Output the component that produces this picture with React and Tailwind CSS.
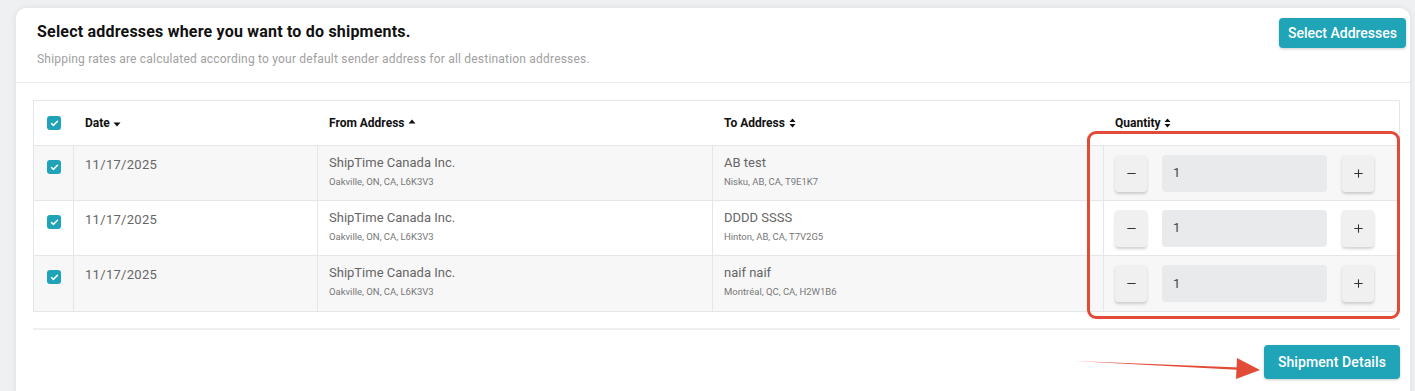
import { Check, Minus, Plus } from "lucide-react";

const rows = [
  { date: "11/17/2025", to: "AB test", toSub: "Nisku, AB, CA, T9E1K7", shade: true },
  { date: "11/17/2025", to: "DDDD SSSS", toSub: "Hinton, AB, CA, T7V2G5", shade: false },
  { date: "11/17/2025", to: "naif naif", toSub: "Montréal, QC, CA, H2W1B6", shade: true },
];

const cols = "grid grid-cols-[39px_244px_395px_391px_1fr]";

function Box() {
  return (
    <span className="flex h-[14px] w-[14px] items-center justify-center rounded-[3px] bg-[#1fa3b8]">
      <Check className="h-[9px] w-[9px] text-white" strokeWidth={4} />
    </span>
  );
}

function SortBoth() {
  return (
    <svg width="7" height="10" viewBox="0 0 7 10" className="ml-1">
      <path d="M0.5 4L3.5 0.5L6.5 4Z" fill="#111" />
      <path d="M0.5 6L3.5 9.5L6.5 6Z" fill="#111" />
    </svg>
  );
}

function QtyButton({ children }) {
  return (
    <button className="flex h-[37px] w-[32px] items-center justify-center rounded-[4px] bg-[#f0f0f0] text-[#333] shadow-[0_2px_3px_rgba(0,0,0,0.18)]">
      {children}
    </button>
  );
}

export default function App() {
  return (
    <div className="relative h-[391px] w-[1415px] overflow-hidden bg-[#eef0f1] font-['Roboto',sans-serif]">
      <div className="ml-[16px] mt-[8px] h-[400px] w-[1394px] rounded-t-[10px] bg-white shadow-[0_0_6px_rgba(0,0,0,0.08)]">
        {/* Header */}
        <div className="flex items-start justify-between border-b border-[#ebedef] pl-[21px] pr-[4px] pt-[10px] h-[75px]">
          <div>
            <h1 className="mt-[4px] text-[16px] font-bold leading-[20px] tracking-[0.2px] text-[#111]">
              Select addresses where you want to do shipments.
            </h1>
            <p className="mt-[10px] text-[12px] leading-[14px] tracking-[0.2px] text-[#a0a0a0]">
              Shipping rates are calculated according to your default sender address for all destination addresses.
            </p>
          </div>
          <button className="h-[30px] rounded-[4px] bg-[#1fa4b8] px-[9px] text-[14px] font-medium text-white shadow-[0_1px_3px_rgba(0,0,0,0.2)]">
            Select Addresses
          </button>
        </div>

        {/* Table */}
        <div className="ml-[17px] mt-[17px] w-[1367px] border border-[#e4e7ea]">
          <div className={`${cols} h-[45px] items-center border-b border-[#e4e7ea] text-[12px] font-bold text-[#111]`}>
            <div className="flex justify-center pl-[1px]"><Box /></div>
            <div className="flex items-center pl-[12px]">
              Date
              <svg width="8" height="5" viewBox="0 0 8 5" className="ml-[3px] mt-[2px]"><path d="M0.5 0.5L4 4.5L7.5 0.5Z" fill="#111" /></svg>
            </div>
            <div className="flex items-center pl-[12px]">
              From Address
              <svg width="8" height="5" viewBox="0 0 8 5" className="ml-[4px] mb-[4px]"><path d="M0.5 4.5L4 0.5L7.5 4.5Z" fill="#111" /></svg>
            </div>
            <div className="flex items-center pl-[12px]">To Address<SortBoth /></div>
            <div className="flex items-center pl-[12px]">Quantity<SortBoth /></div>
          </div>
          {rows.map((r, i) => (
            <div
              key={i}
              className={`${cols} h-[55px] ${i < rows.length - 1 ? "border-b border-[#e4e7ea]" : ""} ${r.shade ? "bg-[#f7f7f7]" : "bg-white"}`}
            >
              <div className="flex justify-center pt-[14px] pl-[1px]"><Box /></div>
              <div className="border-l border-[#e4e7ea] pl-[11px] pt-[9px] text-[13px] tracking-[0.3px] text-[#666]">{r.date}</div>
              <div className="border-l border-[#e4e7ea] pl-[11px] pt-[9px]">
                <div className="text-[13px] leading-[16px] text-[#666]">ShipTime Canada Inc.</div>
                <div className="mt-[4px] text-[9.5px] leading-[13px] text-[#777]">Oakville, ON, CA, L6K3V3</div>
              </div>
              <div className="border-l border-[#e4e7ea] pl-[11px] pt-[9px]">
                <div className="text-[13px] leading-[16px] text-[#666]">{r.to}</div>
                <div className="mt-[4px] text-[9.5px] leading-[13px] text-[#777]">{r.toSub}</div>
              </div>
              <div className="flex items-center border-l border-[#e4e7ea] pl-[11px]">
                <QtyButton><Minus className="h-[13px] w-[13px]" strokeWidth={2} /></QtyButton>
                <div className="ml-[15px] flex h-[37px] w-[165px] items-center rounded-[4px] bg-[#e8eaec] pl-[11px] text-[13px] text-[#444]">1</div>
                <div className="ml-[15px]">
                  <QtyButton><Plus className="h-[13px] w-[13px]" strokeWidth={2} /></QtyButton>
                </div>
              </div>
            </div>
          ))}
        </div>

        <div className="ml-[17px] mt-[16px] w-[1367px] border-t-2 border-[#eeeff1]" />

        <div className="flex justify-end pr-[10px] pt-[15px]">
          <button className="h-[34px] rounded-[4px] bg-[#1fa4b8] px-[14px] text-[14px] font-medium tracking-[0.1px] text-white shadow-[0_1px_3px_rgba(0,0,0,0.2)]">
            Shipment Details
          </button>
        </div>
      </div>

      {/* Annotation overlay */}
      <div className="pointer-events-none absolute left-[1087px] top-[131px] h-[188px] w-[313px] rounded-[9px] border-[3px] border-[#e34b39]" />
      <svg className="pointer-events-none absolute left-[1070px] top-[350px]" width="195" height="30" viewBox="0 0 195 30">
        <path d="M4 11 L170 17.5 L171 20 Z" fill="#e34b39" />
        <path d="M167 8 L190 20 L166 29 Z" fill="#e34b39" />
      </svg>
    </div>
  );
}
